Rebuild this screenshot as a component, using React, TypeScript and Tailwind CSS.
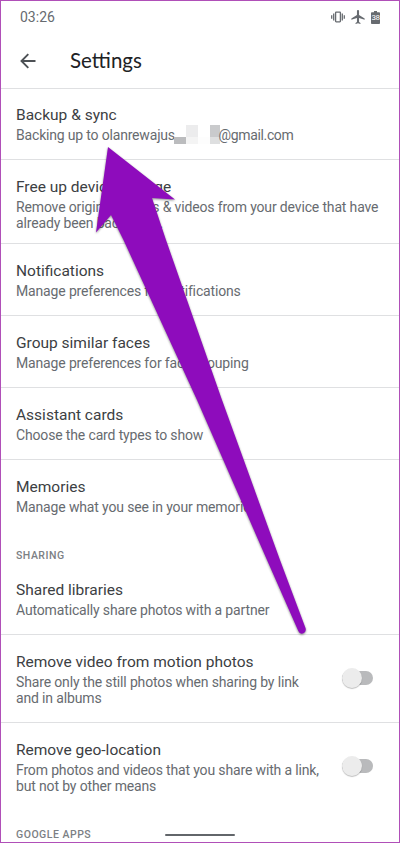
import { useState } from "react";

type Item = {
  title: string;
  lines: string[];
  height: string;
  toggle?: boolean;
};

const generalItems: Item[] = [
  { title: "Free up device storage", lines: ["Remove original photos & videos from your device that have", "already been backed up."], height: "h-[84px]" },
  { title: "Notifications", lines: ["Manage preferences for notifications"], height: "h-[72px]" },
  { title: "Group similar faces", lines: ["Manage preferences for face grouping"], height: "h-[72px]" },
  { title: "Assistant cards", lines: ["Choose the card types to show"], height: "h-[72px]" },
  { title: "Memories", lines: ["Manage what you see in your memories"], height: "h-[72px]" },
];

const sharingItems: Item[] = [
  { title: "Remove video from motion photos", lines: ["Share only the still photos when sharing by link", "and in albums"], height: "h-[88px]", toggle: true },
  { title: "Remove geo-location", lines: ["From photos and videos that you share with a link,", "but not by other means"], height: "h-[88px]", toggle: true },
];

function Toggle() {
  const [on, setOn] = useState(false);

  return (
    <button
      role="switch"
      aria-checked={on}
      onClick={() => setOn(!on)}
      className="mt-9 mr-[27px] flex h-3.5 w-[31px] shrink-0 items-center rounded-full bg-[#b9babc]"
    >
      <span className={`size-5 shrink-0 rounded-full bg-[#ececec] shadow-[0_1px_1px_rgba(0,0,0,0.25)] ${on ? "ml-[11px]" : "ml-0"}`} />
    </button>
  );
}

function Title({ children }: { children: string }) {
  return <h2 className="text-[15.5px] leading-5 whitespace-nowrap text-[#3c4043]">{children}</h2>;
}

function Row({ item }: { item: Item }) {
  return (
    <div className={`flex justify-between border-t border-[#dfe0e2] pl-4 ${item.height}`}>
      <div className="pt-[17px]">
        <Title>{item.title}</Title>
        <div className="pt-0.5 text-[14px] leading-4 tracking-[-0.15px] whitespace-nowrap text-[#676b70]">
          {item.lines.map((line) => (
            <p key={line}>{line}</p>
          ))}
        </div>
      </div>
      {item.toggle && <Toggle />}
    </div>
  );
}

function StatusIcons() {
  return (
    <div className="flex items-center text-[#676b70]">
      <svg width="14" height="12" viewBox="0 0 14 12" fill="none" stroke="currentColor">
        <rect x="4.6" y="1.2" width="4.8" height="9.6" rx="0.5" strokeWidth="1.3" />
        <path d="M2.7 2.5v7M11.3 2.5v7M0.7 4.2v3.6M13.3 4.2v3.6" strokeWidth="1.3" />
      </svg>
      <svg className="ml-1.5" width="14" height="14" viewBox="2 2 20 20" fill="currentColor">
        <path transform="translate(.5 0)" d="M21 16v-2l-8-5V3.5c0-.83-.67-1.5-1.5-1.5S10 2.67 10 3.5V9l-8 5v2l8-2.5V19l-2 1.5V22l3.5-1 3.5 1v-1.5L13 19v-5.5z" />
      </svg>
      <div className="relative ml-[6px] h-[13px] w-[9px]">
        <svg width="9" height="13" viewBox="0 0 9 13" fill="currentColor">
          <path d="M3 0h3v1.3h2.2q.8 0 .8.8v10q0 .9-.8.9H.8Q0 13 0 12.1v-10q0-.8.8-.8H3z" />
        </svg>
        <span className="absolute inset-x-0 top-[3px] text-center text-[8px] leading-[8px] tracking-[-0.6px] text-white">38</span>
      </div>
    </div>
  );
}

export default function App() {
  return (
    <div className="relative h-[843px] w-[400px] overflow-hidden bg-white font-['Roboto','Liberation_Sans',sans-serif]">
      <header className="h-[88px]">
        <div className="flex h-[34px] items-center justify-between pr-5 pl-5">
          <span className="pt-px text-[14px] text-[#676b70]">03:26</span>
          <StatusIcons />
        </div>
        <div className="flex h-[54px] items-center pl-5">
          <svg width="16" height="16" viewBox="0 0 16 16" fill="none" stroke="#4d5155" strokeWidth="1.9">
            <path d="M15.5 8H2M8.3 1.2 1.5 8l6.8 6.8" />
          </svg>
          <h1 className="-mt-0.5 ml-[34px] font-['Lato','Roboto',sans-serif] text-[20.5px] leading-7 text-[#202124]">Settings</h1>
        </div>
      </header>

      <main>
        <div className="h-[71px] border-t border-[#dfe0e2] pt-4 pl-4">
          <Title>Backup & sync</Title>
          <p className="flex pt-0.5 text-[14px] leading-4 tracking-[-0.18px] whitespace-nowrap text-[#676b70]">
            <span className="w-[158px]">Backing up to olanrewajus</span>
            <span className="-mt-0.5 grid h-[19px] w-[46px] grid-cols-[12px_12px_12px_10px] grid-rows-[12px_7px]">
              <span />
              <span className="bg-[#ececed]" />
              <span />
              <span className="bg-[#c9cacc]" />
              <span className="bg-[#bbbcbe]" />
              <span className="bg-[#f4f4f4]" />
              <span className="bg-[#fdfdfd]" />
              <span className="bg-[#dedfe0]" />
            </span>
            <span className="-ml-[1.5px] tracking-[-0.35px]">@gmail.com</span>
          </p>
        </div>

        {generalItems.map((item) => (
          <Row key={item.title} item={item} />
        ))}

        <h3 className="h-[32px] pt-[17px] pl-4 text-[10.5px] leading-4 font-medium tracking-[0.5px] text-[#7c8084]">SHARING</h3>
        <div className="h-[71px] pt-[17px] pl-4">
          <Title>Shared libraries</Title>
          <p className="pt-0.5 text-[14px] leading-4 tracking-[-0.15px] text-[#676b70]">Automatically share photos with a partner</p>
        </div>

        {sharingItems.map((item) => (
          <Row key={item.title} item={item} />
        ))}

        <h3 className="pt-[17px] pl-4 text-[10.5px] leading-4 font-medium tracking-[0.5px] text-[#7c8084]">GOOGLE APPS</h3>
      </main>

      {/* gesture bar */}
      <div className="absolute top-[834px] left-[165px] h-[2px] w-[70px] rounded-full bg-[#62666a]" />

      {/* arrow pointing at the backup row */}
      <svg className="pointer-events-none absolute inset-0 drop-shadow-[0_1px_1px_rgba(0,0,0,0.45)]" width="400" height="843" viewBox="0 0 400 843">
        <path
          d="M108 147 175 199.5 152 198 166 240 222 400 280 560 305.5 628Q306.5 631 304 633 300 635 298.3 631L267 560 197 400 123.5 240 111 215 96 232.5z"
          fill="#8e0cbc"
        />
      </svg>

      <div className="pointer-events-none absolute inset-0 border border-[#b04fb8]" />
    </div>
  );
}
